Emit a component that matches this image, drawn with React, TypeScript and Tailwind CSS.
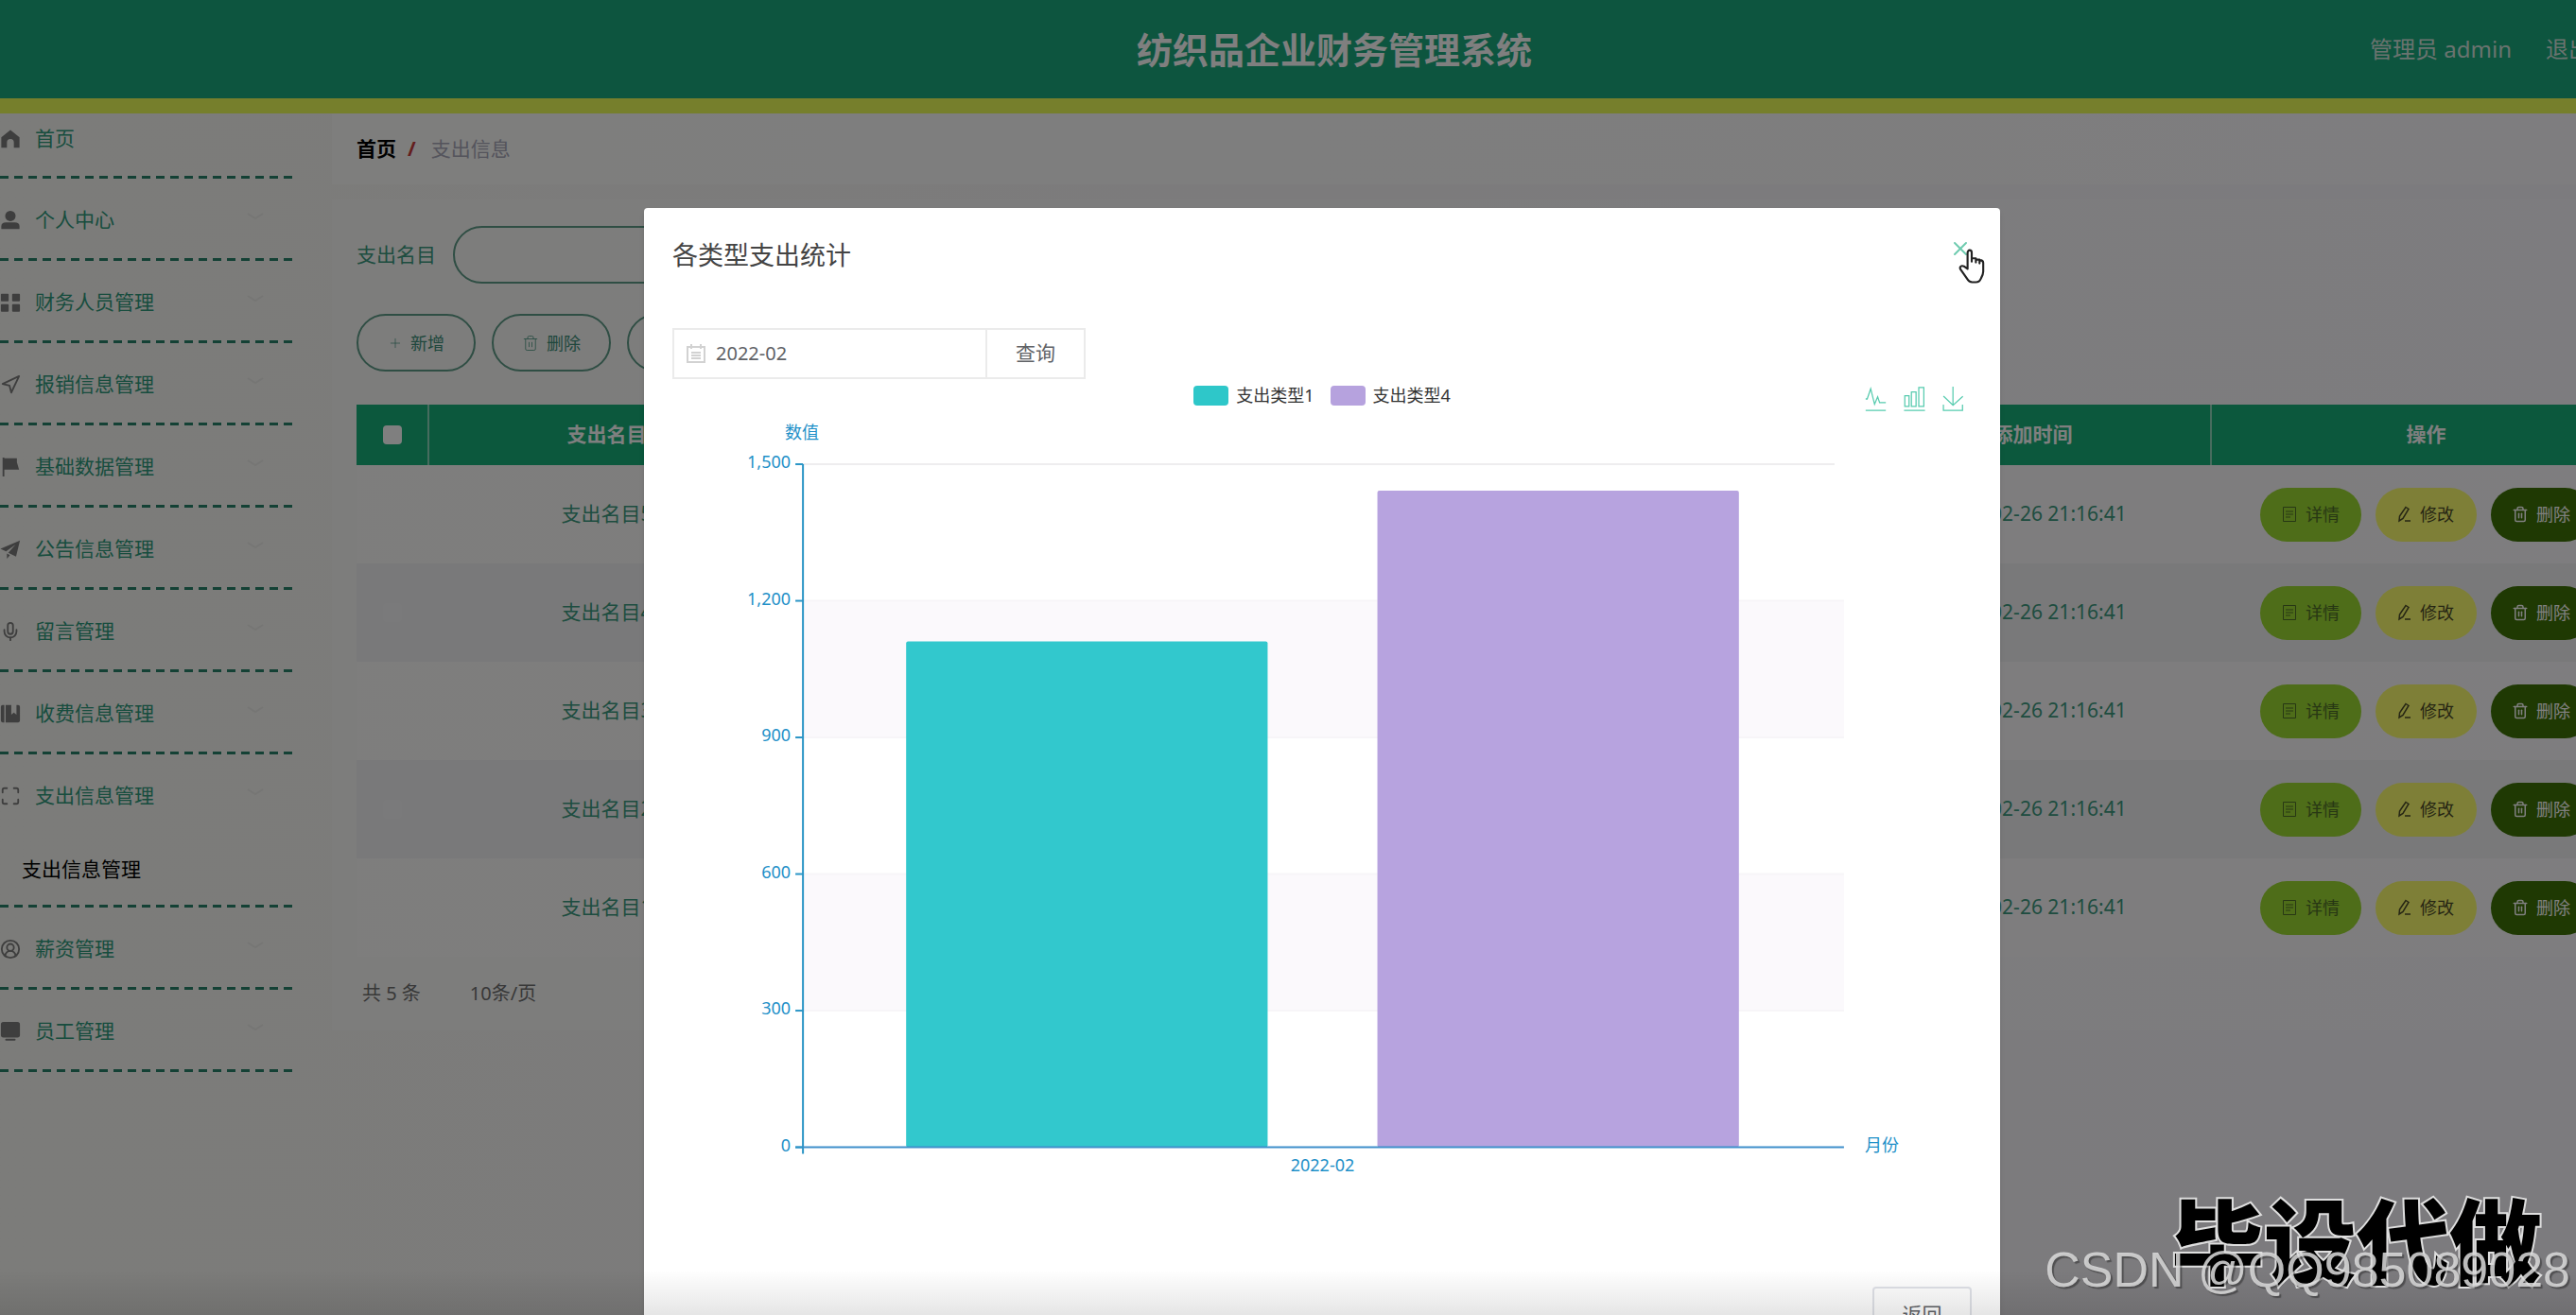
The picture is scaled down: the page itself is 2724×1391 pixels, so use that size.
import type { ComponentType, ReactNode } from "react";
import { CircleUserRound, Maximize, Mic, Navigation, Plus, Trash2, X } from "lucide-react";

type IconProps = { className?: string };

function HomeIcon({ className }: IconProps) {
  return (
    <svg viewBox="0 0 24 24" className={className} fill="currentColor">
      <path d="M12 1.500 1.500 10v12H8v-6a4 4 0 0 1 8 0v6h6.500V10z" />
    </svg>
  );
}

function UserIcon({ className }: IconProps) {
  return (
    <svg viewBox="0 0 24 24" className={className} fill="currentColor">
      <circle cx="12" cy="7" r="6" />
      <path d="M1.500 22v-3c0-3 2-4.500 5.500-4.500h10c3.500 0 5.500 1.500 5.500 4.500v3z" />
    </svg>
  );
}

function GridIcon({ className }: IconProps) {
  return (
    <svg viewBox="0 0 24 24" className={className} fill="currentColor">
      <rect x="1" y="2" width="9" height="8.500" rx="1" />
      <rect x="14" y="2" width="9" height="8.500" rx="1" />
      <rect x="1" y="14" width="9" height="8.500" rx="1" />
      <rect x="14" y="14" width="9" height="8.500" rx="1" />
    </svg>
  );
}

function FlagIcon({ className }: IconProps) {
  return (
    <svg viewBox="0 0 24 24" className={className} fill="currentColor">
      <path d="M3 1h2v1h14.500v4.500l2.500 8.500H5v8H3z" />
    </svg>
  );
}

function PlaneIcon({ className }: IconProps) {
  return (
    <svg viewBox="0 0 24 24" className={className} fill="currentColor">
      <path d="M23 2 .5 11.500 7 14.500 18 6.500 9.500 16l9 4.500zM8 17v6l3.500-4.300z" />
    </svg>
  );
}

function BookIcon({ className }: IconProps) {
  return (
    <svg viewBox="0 0 24 24" className={className} fill="currentColor">
      <path d="M1 4a2 2 0 0 1 2-2h2v20H3a2 2 0 0 1-2-2zM6.500 2H13v11l3-2.500 3 2.500V2h2a2 2 0 0 1 2 2v16a2 2 0 0 1-2 2H6.500z" />
    </svg>
  );
}

function MonitorIcon({ className }: IconProps) {
  return (
    <svg viewBox="0 0 24 24" className={className} fill="currentColor">
      <rect x="1" y="1" width="22" height="18" rx="3" />
      <rect x="6" y="20.500" width="12" height="2" rx="1" />
    </svg>
  );
}

function TicketIcon() {
  return (
    <svg viewBox="0 0 18 18" className="h-[18px] w-[18px]" fill="none" stroke="currentColor">
      <path d="M2.500 1.500h13v15h-13zM5 6h8M5 9h8M5 12h5" />
    </svg>
  );
}

function EditIcon() {
  return (
    <svg viewBox="0 0 16 18" className="h-[18px] w-4" fill="none" stroke="currentColor" strokeWidth="1.500">
      <path d="M9 1.500 12 3.500 6 13.500 2 16 2.500 11zM8 16h6" />
    </svg>
  );
}

type MenuItem = { label: string; icon: ComponentType<IconProps>; child?: string };

const menu: MenuItem[] = [
  { label: "个人中心", icon: UserIcon },
  { label: "财务人员管理", icon: GridIcon },
  { label: "报销信息管理", icon: Navigation },
  { label: "基础数据管理", icon: FlagIcon },
  { label: "公告信息管理", icon: PlaneIcon },
  { label: "留言管理", icon: Mic },
  { label: "收费信息管理", icon: BookIcon },
  { label: "支出信息管理", icon: Maximize, child: "支出信息管理" },
  { label: "薪资管理", icon: CircleUserRound },
  { label: "员工管理", icon: MonitorIcon },
];

const rows = [
  { name: "支出名目5", type: "支出类型1", amount: "561", created: "2022-02-26 21:16:41" },
  { name: "支出名目4", type: "支出类型4", amount: "824", created: "2022-02-26 21:16:41" },
  { name: "支出名目3", type: "支出类型4", amount: "617", created: "2022-02-26 21:16:41" },
  { name: "支出名目2", type: "支出类型1", amount: "350", created: "2022-02-26 21:16:41" },
  { name: "支出名目1", type: "支出类型1", amount: "200", created: "2022-02-26 21:16:41" },
];

const series = [
  { name: "支出类型1", value: 1111, x: 247, fill: "#32c8cd" },
  { name: "支出类型4", value: 1442, x: 745, fill: "#b7a3df" },
];

function Dashes() {
  return (
    <div className="h-[3px] w-full bg-[repeating-linear-gradient(90deg,#28826a_0_9px,transparent_9px_15px)]" />
  );
}

function Header() {
  return (
    <header className="grid h-[120px] grid-cols-[1fr_auto_1fr] items-center border-b-[16px] border-[#ecff58] bg-[#1aaa7e] text-white">
      <span />
      <h1 className="text-[38px] font-bold leading-none">纺织品企业财务管理系统</h1>
      <div className="flex items-center justify-end gap-9 pr-[82px] text-2xl text-[#d4e6de]">
        <span>管理员 admin</span>
        <a href="#logout">退出</a>
      </div>
    </header>
  );
}

function Sidebar() {
  return (
    <nav className="w-[311px] shrink-0 text-[21px] text-[#2f9a7c]">
      <a href="#home" className="flex h-[66px] items-center gap-[15px] pb-3">
        <HomeIcon className="h-[22px] w-[22px] text-[#7c7c7c]" />
        首页
      </a>
      <Dashes />
      {menu.map(({ label, icon: Icon, child }) => (
        <div key={label}>
          <a href={`#${label}`} className="flex h-[84px] items-center gap-[15px] pt-[3px]">
            <Icon className="h-[22px] w-[22px] shrink-0 text-[#7c7c7c]" />
            {label}
            <svg viewBox="0 0 18 8" className="mb-2 ml-auto mr-8 h-2 w-[18px]" fill="none" stroke="#ecece9" strokeWidth="2">
              <path d="M1 1l8 5 8-5" />
            </svg>
          </a>
          {child && (
            <a href="#expense" className="flex h-[75px] items-center pl-[23px] text-black">
              {child}
            </a>
          )}
          <Dashes />
        </div>
      ))}
    </nav>
  );
}

function OutlineButton({ children }: { children: ReactNode }) {
  return (
    <button className="flex h-[61px] w-[126px] items-center justify-center gap-2 rounded-full border-2 border-[#5f9c88] text-lg text-[#3d8f78]">
      {children}
    </button>
  );
}

function RowButton({ className, children }: { className: string; children: ReactNode }) {
  return (
    <button className={`flex h-[57px] w-[107px] items-center justify-center gap-2 rounded-full text-lg ${className}`}>
      {children}
    </button>
  );
}

function ExpenseTable() {
  return (
    <table className="mt-[35px] w-full table-fixed border-collapse text-center text-[21px] text-[#3c9a80]">
      <colgroup>
        <col className="w-[76px]" />
        <col />
        <col />
        <col />
        <col />
        <col />
        <col className="w-[454px]" />
      </colgroup>
      <thead>
        <tr className="h-16 bg-[#18b07a] text-white">
          <th className="border-r-2 border-[#8fd8bd]">
            <input type="checkbox" aria-label="全选" className="mx-auto block h-5 w-5 appearance-none rounded-sm bg-white" />
          </th>
          {["支出名目", "支出类型", "支出金额", "支出时间", "添加时间"].map((h) => (
            <th key={h} className="border-r-2 border-[#8fd8bd] font-bold">{h}</th>
          ))}
          <th className="font-bold">操作</th>
        </tr>
      </thead>
      <tbody>
        {rows.map((r) => (
          <tr key={r.name} className="h-[104px] bg-white/30 even:bg-[#f3f3f4]">
            <td>
              <input type="checkbox" aria-label={r.name} className="mx-auto block h-5 w-5 appearance-none rounded-sm bg-white/20" />
            </td>
            <td>{r.name}</td>
            <td>{r.type}</td>
            <td>{r.amount}</td>
            <td>{r.created}</td>
            <td>{r.created}</td>
            <td>
              <div className="flex justify-center gap-[15px]">
                <RowButton className="bg-[#9cda32] text-[#4f6e28]"><TicketIcon />详情</RowButton>
                <RowButton className="bg-[#fdff6e] text-[#4c4c28]"><EditIcon />修改</RowButton>
                <RowButton className="bg-[#3e7206] text-white">
                  <Trash2 className="h-[18px] w-[18px]" strokeWidth={2} />删除
                </RowButton>
              </div>
            </td>
          </tr>
        ))}
      </tbody>
    </table>
  );
}

function Main() {
  return (
    <main className="ml-10 min-w-0 flex-1">
      <div className="flex h-[75px] items-center gap-3 bg-white/60 pl-[26px] text-[21px]">
        <a href="#home" className="font-bold text-black">首页</a>
        <span className="font-bold text-[#c83c3c]">/</span>
        <span className="pl-1 text-[#a8a8b8]">支出信息</span>
      </div>
      <section className="mt-4 bg-white/40 pb-5 pl-[26px] pr-[30px] pt-7">
        <div className="flex items-center gap-[18px] text-[21px] text-[#3c9a80]">
          <label htmlFor="expense-name">支出名目</label>
          <input id="expense-name" className="h-[61px] w-[360px] rounded-full border-2 border-[#5f9c88] px-6" />
        </div>
        <div className="mt-8 flex gap-[17px]">
          <OutlineButton><Plus className="h-4 w-4" strokeWidth={1} />新增</OutlineButton>
          <OutlineButton><Trash2 className="h-[18px] w-[18px]" strokeWidth={1} />删除</OutlineButton>
          <OutlineButton>统计</OutlineButton>
        </div>
        <ExpenseTable />
        <div className="mt-5 flex h-[38px] items-center gap-[52px] pl-1.5 text-xl text-[#707070]">
          <span>共 5 条</span>
          <select aria-label="每页条数" className="w-[120px] appearance-none">
            <option>10条/页</option>
          </select>
        </div>
      </section>
    </main>
  );
}

const TOP = 51;
const BASE = 773;
const yOf = (v: number) => BASE - (v / 1500) * (BASE - TOP);

function BarChart() {
  return (
    <svg viewBox="0 0 1373 862" className="block w-full" fontSize="18" fill="#1e90c8">
      <rect x="138" y={yOf(1200)} width="1100" height={yOf(900) - yOf(1200)} fill="#fbf9fc" />
      <rect x="138" y={yOf(600)} width="1100" height={yOf(300) - yOf(600)} fill="#fbf9fc" />
      {[300, 600, 900, 1200].map((v) => (
        <path key={v} d={`M138 ${yOf(v)}H1238`} stroke="#f7f5f8" strokeWidth="2" />
      ))}
      <path d={`M138 ${TOP}H1228`} stroke="#eeedef" strokeWidth="2" />
      {series.map((s) => (
        <rect key={s.name} x={s.x} y={yOf(s.value)} width="382" height={BASE - yOf(s.value)} rx="2" fill={s.fill} />
      ))}
      <path d="M138 51V780" stroke="#2b95c6" strokeWidth="2" />
      <path d="M130 773H1238" stroke="#3f8fcb" strokeWidth="2" />
      {[0, 300, 600, 900, 1200, 1500].map((v) => (
        <g key={v}>
          <path d={`M130 ${yOf(v)}h8`} stroke="#2b95c6" strokeWidth="2" />
          <text x="125" y={yOf(v) + 4} textAnchor="end">{v.toLocaleString("en-US")}</text>
        </g>
      ))}
      <text x="137" y="24" textAnchor="middle">数值</text>
      <text x="687" y="798" textAnchor="middle">2022-02</text>
      <text x="1260" y="777">月份</text>
    </svg>
  );
}

function Tool({ label, d }: { label: string; d: string }) {
  return (
    <button aria-label={label}>
      <svg viewBox="2 0 56 60" preserveAspectRatio="none" className="h-[26px] w-[23px]" fill="none" stroke="#56cbae" strokeWidth="3">
        <path d={d} />
      </svg>
    </button>
  );
}

function HandCursor() {
  return (
    <svg viewBox="0 0 28 38" className="absolute left-2.5 top-3 h-[37px] w-7" fill="#fff" stroke="#222" strokeWidth="2.200" strokeLinejoin="round" strokeLinecap="round">
      <path d="M9.500 22V4.500C9.500.8 14 .8 14 4.500V14v-3.500h4.500V15v-3h4v4-3.500c2 0 4 .5 4 3V25c0 3-1 5-2.500 7.500-1 2.500-3 4-5.500 4h-4c-2.500 0-4.500-2-6-4.500L1.800 22.500c-1.500-3 1.200-4.500 3.700-3.300z" />
    </svg>
  );
}

function StatsDialog() {
  return (
    <div className="absolute inset-0 overflow-hidden bg-black/50 pl-[681px] pr-[609px] pt-[220px]">
      <div role="dialog" aria-labelledby="stats-title" className="rounded-sm bg-white px-[30px] pb-8 pt-[30px] shadow-md">
        <div className="flex h-[38px] items-center justify-between">
          <h2 id="stats-title" className="text-[27px] leading-none text-[#444]">各类型支出统计</h2>
          <div className="relative mb-3">
            <button aria-label="关闭" className="block">
              <X className="h-6 w-6 text-[#6fcbb0]" strokeWidth={2} />
            </button>
            <HandCursor />
          </div>
        </div>

        <div className="mt-[59px] flex h-[54px] text-[#606266]">
          <label className="flex w-[333px] items-center gap-2.5 border-2 border-[#ebebeb] pl-3">
            <svg viewBox="0 0 22 22" className="h-[22px] w-[22px] shrink-0" fill="none" stroke="#d2d2d2" strokeWidth="2">
              <path d="M2 4h18v16H2zM6 1v5M16 1v5M6 10h10M6 13h10M6 16h10" />
            </svg>
            <input aria-label="月份" defaultValue="2022-02" className="w-full text-xl outline-none" />
          </label>
          <button className="w-[104px] border-2 border-l-0 border-[#ebebeb] text-[21px]">查询</button>
        </div>

        <div className="grid h-[39px] grid-cols-[1fr_auto_1fr]">
          <span />
          <div className="flex h-[34px] items-center gap-[17px] text-lg text-[#333]">
            <span className="flex items-center gap-2">
              <i className="h-[21px] w-[37px] rounded bg-[#2ec7c9]" />支出类型1
            </span>
            <span className="flex items-center gap-2">
              <i className="h-[21px] w-[37px] rounded bg-[#b6a2de]" />支出类型4
            </span>
          </div>
          <div className="flex items-start justify-end gap-[18px] pr-2 pt-2">
            <Tool label="折线图" d="M4 30h4l9-25 10 38 8-18 5 14h16M4 58h52" />
            <Tool label="柱状图" d="M5 22h11v26H5zM22 13h12v35H22zM41 2h13v46H41zM3 58h54" />
            <Tool label="下载" d="M4.700 22.900 29.300 45.500 54.700 23.400M4.600 43.600V58h49.200V43.600M29.200 45V0" />
          </div>
        </div>

        <BarChart />

        <div className="mt-[58px] flex justify-end">
          <button className="h-[60px] w-[105px] rounded border-2 border-[#e0e2e8] text-[21px] leading-none text-[#606266]">返回</button>
        </div>
      </div>
    </div>
  );
}

function Watermark() {
  return (
    <div className="pointer-events-none absolute bottom-0 right-0 grid justify-items-end">
      <span className="col-start-1 row-start-1 pr-9 font-['Noto_Sans_CJK_SC'] text-[98px] font-black leading-[166px] text-black [-webkit-text-stroke:4px_#dedede] [paint-order:stroke_fill]">
        毕设代做
      </span>
      <span className="col-start-1 row-start-1 self-end whitespace-nowrap pb-[18px] pr-1.5 font-['Liberation_Sans'] text-[52px] leading-[60px] text-[#dcdcdc]/85 [text-shadow:2px_2px_1px_rgba(0,0,0,0.35)]">
        CSDN @QQ985089028
      </span>
    </div>
  );
}

export default function App() {
  return (
    <div className="relative h-screen overflow-hidden bg-gradient-to-r from-[#f8f8f4] to-[#f9f6fd] font-['Noto_Sans','Noto_Sans_CJK_SC',sans-serif]">
      {/* page runs a little wider than the window and is cut at the right */}
      <div className="w-[calc(100%+98px)]">
        <Header />
        <div className="flex">
          <Sidebar />
          <Main />
        </div>
      </div>
      <StatsDialog />
      <div className="pointer-events-none absolute inset-x-0 bottom-0 h-12 bg-gradient-to-b from-transparent to-black/10" />
      <Watermark />
    </div>
  );
}
